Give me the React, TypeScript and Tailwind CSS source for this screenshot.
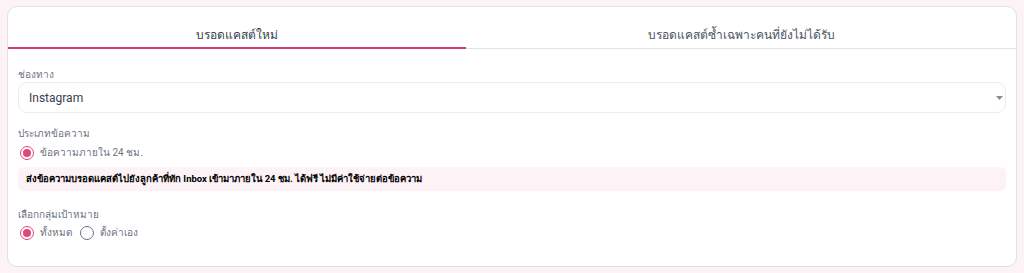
import React, { useState } from 'react';

const Radio: React.FC<{ checked?: boolean; label: string }> = ({ checked, label }) => (
  <label className="flex items-center gap-[6px] h-[16px] cursor-pointer">
    <span
      className={`w-[14px] h-[14px] rounded-full border-[1.5px] flex items-center justify-center ${
        checked ? 'border-[#e0457b]' : 'border-[#6b7280]'
      }`}
    >
      {checked && <span className="w-[8px] h-[8px] rounded-full bg-[#e0457b]" />}
    </span>
    <span className="text-[10px] leading-[16px] text-[#6b7280]">{label}</span>
  </label>
);

export default function App() {
  const [tab, setTab] = useState(0);

  return (
    <div className="w-[1024px] h-[273px] bg-[#fdf2f6] pt-[6px] px-[7px] font-['Roboto',_'Noto_Sans',_sans-serif]">
      <div className="bg-white border border-[#e2e2e2] rounded-[10px] h-[261px] overflow-hidden">
        {/* tabs */}
        <div className="flex border-b border-[#e2e2e2] h-[42px]">
          <button
            onClick={() => setTab(0)}
            className={`w-[458px] flex items-end justify-center pb-[5px] text-[12px] leading-[14px] text-[#374151] border-b-2 -mb-[1px] ${
              tab === 0 ? 'border-[#d63c6b]' : 'border-transparent'
            }`}
          >
            บรอดแคสต์ใหม่
          </button>
          <button
            onClick={() => setTab(1)}
            className={`flex-1 flex items-end justify-center pb-[5px] text-[12px] leading-[14px] text-[#4b5563] border-b-2 -mb-[1px] ${
              tab === 1 ? 'border-[#d63c6b]' : 'border-transparent'
            }`}
          >
            บรอดแคสต์ซ้ำเฉพาะคนที่ยังไม่ได้รับ
          </button>
        </div>

        <div className="px-[10px] pt-[19px]">
          <div className="text-[10px] text-[#6b7280] leading-[14px]">ช่องทาง</div>
          <div className="h-[31px] border border-[#ececec] rounded-[9px] flex items-center justify-between pl-[10px] pr-[2px]">
            <span className="text-[12px] text-[#374151]">Instagram</span>
            <svg width="7" height="4" viewBox="0 0 7 4">
              <path d="M0 0 L7 0 L3.5 4 Z" fill="#8a8a8a" />
            </svg>
          </div>

          <div className="mt-[14px] text-[10px] text-[#6b7280] leading-[14px]">ประเภทข้อความ</div>
          <div className="mt-[4px] pl-[2px]">
            <Radio checked label="ข้อความภายใน 24 ชม." />
          </div>
          <div className="mt-[6px] h-[24px] bg-[#fdf2f6] rounded-[6px] flex items-center px-[8px]">
            <span className="text-[9.5px] font-bold text-black">
              ส่งข้อความบรอดแคสต์ไปยังลูกค้าที่ทัก Inbox เข้ามาภายใน 24 ชม. ได้ฟรี ไม่มีค่าใช้จ่ายต่อข้อความ
            </span>
          </div>

          <div className="mt-[17px] text-[10px] text-[#6b7280] leading-[14px]">เลือกกลุ่มเป้าหมาย</div>
          <div className="mt-[3px] pl-[2px] flex items-center gap-[8px]">
            <Radio checked label="ทั้งหมด" />
            <Radio label="ตั้งค่าเอง" />
          </div>
        </div>
      </div>
    </div>
  );
}
